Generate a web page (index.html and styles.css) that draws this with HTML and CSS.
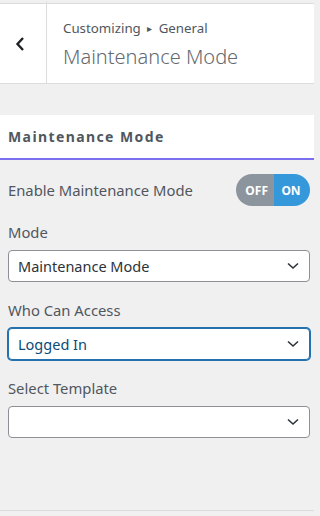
FILE: index.html
```html
<!DOCTYPE html>
<html lang="en">
<head>
<meta charset="utf-8">
<title>Maintenance Mode</title>
<link rel="stylesheet" href="styles.css">
</head>
<body>
<header class="panel-header">
  <div class="back">
    <svg width="12" height="16" viewBox="0 0 12 16" aria-hidden="true"><path d="M9 2 L3.5 8 L9 14" fill="none" stroke="#1d2327" stroke-width="2.4"/></svg>
  </div>
  <div class="titles">
    <div class="crumb">Customizing <span class="tri">&#9656;</span> General</div>
    <div class="title">Maintenance Mode</div>
  </div>
</header>
<div class="gap"></div>
<div class="section-head">Maintenance Mode</div>
<main class="controls">
  <div class="toggle-row">
    <span class="label">Enable Maintenance Mode</span>
    <div class="toggle"><span class="off">OFF</span><span class="on">ON</span></div>
  </div>
  <div class="field">
    <div class="label">Mode</div>
    <div class="select"><span>Maintenance Mode</span><svg width="12" height="8" viewBox="0 0 12 8"><path d="M1 1.5 L6 6 L11 1.5" fill="none" stroke="#2c3338" stroke-width="1.6"/></svg></div>
  </div>
  <div class="field">
    <div class="label">Who Can Access</div>
    <div class="select focus"><span>Logged In</span><svg width="12" height="8" viewBox="0 0 12 8"><path d="M1 1.5 L6 6 L11 1.5" fill="none" stroke="#2c3338" stroke-width="1.6"/></svg></div>
  </div>
  <div class="field">
    <div class="label">Select Template</div>
    <div class="select"><span></span><svg width="12" height="8" viewBox="0 0 12 8"><path d="M1 1.5 L6 6 L11 1.5" fill="none" stroke="#2c3338" stroke-width="1.6"/></svg></div>
  </div>
</main>
<div class="footer-line"></div>
</body>
</html>
```
FILE: styles.css
```css
* { box-sizing: border-box; }
html { background: #f0f0f1; }
html, body { margin: 0; padding: 0; }
body {
  width: 314px;
  min-height: 100vh;
  background: #f0f0f1;
  font-family: "Noto Sans", "Open Sans", sans-serif;
  color: #50575e;
  overflow: hidden;
  display: flex;
  flex-direction: column;
}
.panel-header {
  display: flex;
  height: 84px;
  background: #fff;
  border-bottom: 1px solid #dcdcde;
}
.back, .titles {
  border-top: 3px solid #f0f0f1;
  box-shadow: inset 0 1px 0 #dcdcde;
}
.back {
  width: 47px;
  border-right: 1px solid #dcdcde;
  display: flex;
  align-items: center;
  justify-content: center;
  padding-right: 6px;
  padding-top: 2px;
}
.titles {
  flex: 1;
  padding: 16px 0 0 16px;
}
.crumb {
  font-size: 13.3px;
  line-height: 18px;
  color: #50575e;
}
.tri { font-size: 10px; padding: 0 3px; position: relative; top: -1px; }
.title {
  font-size: 20px;
  font-weight: 300;
  line-height: 28px;
  margin-top: 5px;
  color: #646970;
}
.gap { height: 31px; }
.section-head {
  background: #fff;
  height: 45px;
  border-bottom: 2px solid #7b6ff0;
  padding: 0 8px;
  display: flex;
  align-items: center;
  font-size: 14px;
  font-weight: 700;
  letter-spacing: 1.4px;
  color: #50575e;
}
.controls {
  flex: 1;
  padding: 14px 4px 0 8px;
}
.toggle-row {
  display: flex;
  align-items: center;
  justify-content: space-between;
  height: 32px;
  margin-bottom: 16px;
}
.label {
  font-size: 14.8px;
  line-height: 20px;
  color: #50575e;
}
.field .label { margin-bottom: 8px; }
.field { margin-bottom: 18px; }
.toggle {
  display: flex;
  width: 74px;
  height: 32px;
  border-radius: 16px;
  overflow: hidden;
  font-size: 12px;
  font-weight: 700;
  color: #fff;
}
.toggle .off {
  width: 38px;
  background: #8c959e;
  display: flex;
  align-items: center;
  justify-content: flex-end;
  padding-right: 6px;
}
.toggle .on {
  flex: 1;
  background: #3498db;
  display: flex;
  align-items: center;
  justify-content: center;
  padding-right: 2px;
}
.select {
  height: 32px;
  background: #fff;
  border: 1px solid #8c8f94;
  border-radius: 4px;
  display: flex;
  align-items: center;
  justify-content: space-between;
  padding: 0 10px 0 9px;
  font-size: 14.5px;
  color: #2c3338;
}
.select svg { display: block; }
.select.focus {
  border-color: #2271b1;
  box-shadow: 0 0 0 1px #2271b1;
  color: #0a4b78;
}
.footer-line {
  height: 6px;
  border-top: 1px solid #dcdcde;
}
```
